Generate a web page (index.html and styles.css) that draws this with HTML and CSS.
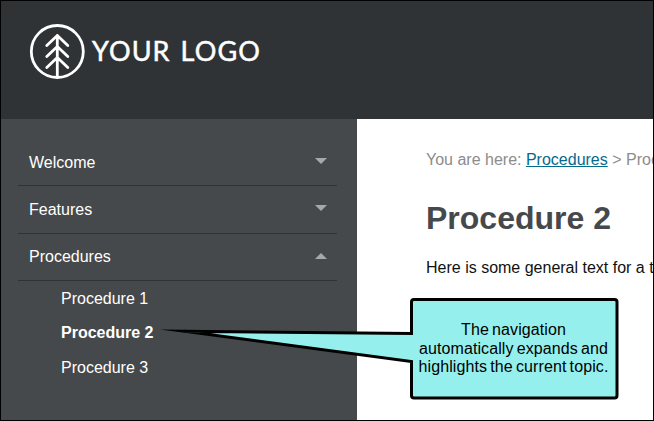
FILE: index.html
```html
<!DOCTYPE html>
<html lang="en">
<head>
<meta charset="utf-8">
<title>Procedure 2</title>
<link rel="stylesheet" href="styles.css">
</head>
<body>
<div class="page">
  <header class="header">
    <svg class="logo-mark" viewBox="0 0 56 56" fill="none" stroke="#fff" stroke-width="2.800" stroke-linecap="round" stroke-linejoin="round">
      <circle cx="28.300" cy="28.500" r="26"/>
      <path d="M28.300 12.500V54M17.800 22.500L28.300 12.500l10.500 10M17.800 33.500L28.300 23.500l10.500 10M17.800 44.500L28.300 34.500l10.500 10"/>
    </svg>
    <div class="logo-text"><span>YOUR</span><span>LOGO</span></div>
  </header>
  <div class="body">
    <nav class="sidebar">
      <a class="item">Welcome<svg class="caret" viewBox="0 0 12 6"><path d="M0 0h12L6 6z"/></svg></a>
      <a class="item tall">Features<svg class="caret" viewBox="0 0 12 6"><path d="M0 0h12L6 6z"/></svg></a>
      <a class="item last">Procedures<svg class="caret up" viewBox="0 0 12 6"><path d="M0 6h12L6 0z"/></svg></a>
      <div class="sub">
        <a>Procedure 1</a>
        <a class="current">Procedure 2</a>
        <a>Procedure 3</a>
      </div>
    </nav>
    <main class="content">
      <div class="crumbs">You are here: <a class="link">Procedures</a> &gt; Procedure 2</div>
      <h1>Procedure 2</h1>
      <p class="text">Here is some general text for a topic.</p>
    </main>
  </div>
  <div class="callout">
    <svg class="callout-shape" viewBox="160 290 460 115">
      <path d="M184 331.200L411.500 333.500V302Q411.500 299.500 414 299.500H614.500Q617 299.500 617 302V395.500Q617 398 614.500 398H414Q411.500 398 411.500 395.500V361.500Z"/>
    </svg>
    <div class="callout-text"><span>The navigation</span><span>automatically expands and</span><span>highlights the current topic.</span></div>
  </div>
</div>
</body>
</html>
```
FILE: styles.css
```css
* { box-sizing: border-box; }
body { margin: 0; font-family: "Liberation Sans", Arial, sans-serif; font-size: 16px; }
.page {
  position: relative;
  width: 654px;
  height: 421px;
  border: 1px solid #000;
  overflow: hidden;
  background: #fff;
  display: flex;
  flex-direction: column;
}
.header {
  height: 118px;
  flex: none;
  background: #2f3336;
  display: flex;
  align-items: flex-start;
  padding: 22px 0 0 28px;
}
.logo-mark { width: 56px; height: 56px; }
.logo-text {
  display: flex;
  gap: 10px;
  margin: 12px 0 0 7px;
  font-family: Lato, sans-serif;
  font-size: 27px;
  line-height: 32px;
  color: #fff;
  letter-spacing: 1.100px;
  -webkit-text-stroke: 0.5px #fff;
}
.body { flex: 1; display: flex; }
.sidebar {
  width: 356px;
  flex: none;
  background: #46494b;
  color: #fff;
  padding: 20px 20px 0 17px;
}
.item {
  display: flex;
  justify-content: space-between;
  height: 47px;
  padding: 15px 10px 0 11px;
  line-height: 18px;
  border-bottom: 1px solid #2f3336;
}
.item.tall { height: 48px; }
.item.last { padding-top: 14px; }
.caret { width: 12px; height: 6px; margin-top: 4px; fill: #a4a9ac; }
.caret.up { margin-top: 5px; }
.sub { display: flex; flex-direction: column; padding: 1px 0 0 43px; }
.sub a { height: 34px; line-height: 34px; }
.sub .current { height: 35px; font-weight: bold; }
.content { flex: 1; min-width: 0; padding: 32px 0 0 69px; white-space: nowrap; overflow: hidden; }
.crumbs { color: #8c8c8c; line-height: 18px; }
.link { color: #066a8c; text-decoration: underline; }
h1 { margin: 31px 0 0; font-size: 32px; line-height: 37px; color: #46494b; }
.text { margin: 22px 0 0; line-height: 18px; color: #111; }
.callout { position: absolute; left: 159px; top: 289px; width: 460px; height: 115px; }
.callout-shape {
  display: block;
  width: 460px;
  height: 115px;
  fill: #95f0ed;
  stroke: #000;
  stroke-width: 3;
  stroke-miterlimit: 30;
}
.callout-text {
  position: absolute;
  left: 252px;
  top: 31px;
  width: 203px;
  display: flex;
  flex-direction: column;
  align-items: center;
  font-size: 16px;
  line-height: 18.500px;
  letter-spacing: 0.1px;
  word-spacing: -1.400px;
  white-space: nowrap;
  color: #000;
}
```
